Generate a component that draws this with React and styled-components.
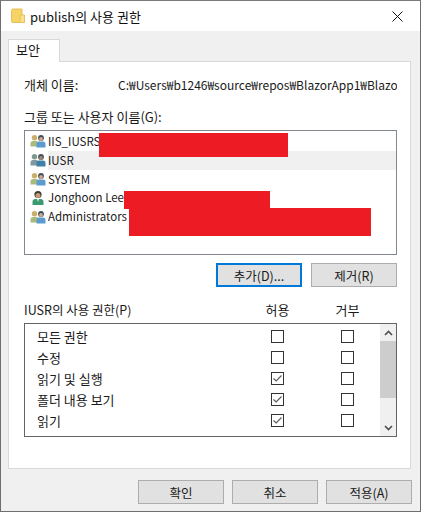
import React from 'react'
import styled, { createGlobalStyle } from 'styled-components'

const Global = createGlobalStyle`
  html, body { margin: 0; padding: 0; background: #f0f0f0; }
  * { box-sizing: border-box; }
  body {
    font-family: "Noto Sans CJK KR", sans-serif;
    font-size: 13px;
    color: #1a1a1a;
  }
`

const Window = styled.div`
  width: 421px;
  height: 512px;
  display: flex;
  flex-direction: column;
  background: #f0f0f0;
  border: 1px solid #6e6e6e;
  border-top-color: #7a7a7a;
  overflow: hidden;
`

const TitleBar = styled.div`
  height: 30px;
  flex: none;
  background: #fff;
  display: flex;
  align-items: center;
  padding-left: 10px;
  gap: 5px;
`

const TitleText = styled.div`
  flex: 1;
  font-size: 13px;
  color: #111;
`

const CloseButton = styled.div`
  width: 46px;
  height: 30px;
  display: flex;
  align-items: center;
  justify-content: center;
`

const Body = styled.div`
  flex: 1;
  display: flex;
  flex-direction: column;
  padding: 8px 9px 7px 7px;
`

const Tab = styled.div`
  width: 52px;
  height: 23px;
  margin-bottom: -1px;
  background: #fff;
  border: 1px solid #d9d9d9;
  border-bottom: none;
  padding-left: 7px;
  line-height: 20px;
  position: relative;
  z-index: 1;
`

const Panel = styled.div`
  height: 408px;
  background: #fff;
  border: 1px solid #d9d9d9;
  padding: 0 13px 0 15px;
  display: flex;
  flex-direction: column;
`

const ObjectRow = styled.div`
  height: 18px;
  margin-top: 13px;
  display: flex;
  align-items: center;
`

const ObjectLabel = styled.div`
  width: 94px;
  flex: none;
`

const ObjectPath = styled.div`
  flex: 1;
  overflow: hidden;
  white-space: nowrap;
  font-size: 12px;
`

const SectionLabel = styled.div`
  height: 18px;
  line-height: 18px;
  margin-top: 15px;
`

const UserList = styled.div`
  position: relative;
  height: 125px;
  margin-top: 4px;
  border: 1px solid #828790;
  padding-top: 1px;
`

const UserRow = styled.div`
  height: 18.8px;
  display: flex;
  align-items: center;
  padding-left: 5px;
  gap: 2px;
`

const UserName = styled.div`
  flex: 1;
  height: 100%;
  line-height: 18px;
  font-size: 11.5px;
  background: ${({ $selected }) => ($selected ? '#f0f0f0' : 'transparent')};
`

// 이름을 가린 빨간 칠
const Redaction = styled.div`
  position: absolute;
  background: #ed1c24;
  left: ${({ $x }) => $x}px;
  top: ${({ $y }) => $y}px;
  width: ${({ $w }) => $w}px;
  height: ${({ $h }) => $h}px;
`

const ButtonRow = styled.div`
  display: flex;
  justify-content: flex-end;
  gap: ${({ $gap }) => $gap}px;
  margin-top: ${({ $top }) => $top}px;
  margin-right: ${({ $right }) => $right || 0}px;
`

const Button = styled.div`
  width: 86px;
  height: 24px;
  background: #e1e1e1;
  font-size: 12.5px;
  border: ${({ $focused }) => ($focused ? '2px solid #0078d7' : '1px solid #adadad')};
  display: flex;
  align-items: center;
  justify-content: center;
`

const PermHeader = styled.div`
  display: grid;
  grid-template-columns: 247px 13px 57px 13px;
  height: 18px;
  line-height: 18px;
  margin-top: 14px;
`

const PermTitle = styled.div`
  font-size: 12.5px;
`

const HeaderCell = styled.div`
  display: flex;
  justify-content: center;
  white-space: nowrap;
`

const PermBox = styled.div`
  height: 114px;
  margin-top: 4px;
  border: 1px solid #646464;
  display: flex;
`

const PermRows = styled.div`
  flex: 1;
  padding: 2px 0 0 12px;
`

const PermRow = styled.div`
  display: grid;
  grid-template-columns: 234px 13px 57px 13px;
  height: 21px;
  align-items: center;
`

const CheckBox = styled.div`
  grid-column: ${({ $col }) => $col};
  width: 13px;
  height: 13px;
  border: 1px solid #333;
  background: #fff;
  display: flex;
`

const ScrollBar = styled.div`
  width: 16px;
  flex: none;
  background: #f0f0f0;
  display: flex;
  flex-direction: column;
`

const ScrollArrow = styled.div`
  height: 17px;
  flex: none;
  display: flex;
  align-items: center;
  justify-content: center;
`

const ScrollTrack = styled.div`
  flex: 1;
`

const ScrollThumb = styled.div`
  height: 57px;
  background: #cdcdcd;
`

const Folder = () => (
  <svg width="14" height="16" viewBox="0 0 14 16">
    <path d="M0.5 2.5 Q0.5 1 2 1 H8 L11 1 V14.5 H1.5 Q0.5 14.5 0.5 13.5 Z" fill="#f6d365" stroke="#e6c05a" />
    <path d="M9 14.5 V7 H13.5 V14.5 Z" fill="#fbe08c" stroke="#e6c05a" />
  </svg>
)

const CloseIcon = () => (
  <svg width="11" height="11" viewBox="0 0 11 11">
    <path d="M0.5 0.5 L10.5 10.5 M10.5 0.5 L0.5 10.5" stroke="#111" strokeWidth="1" />
  </svg>
)

const GroupIcon = ({ muted }) => (
  <svg width="16" height="16" viewBox="0 0 16 16">
    <circle cx="4.5" cy="4.8" r="2.7" fill={muted ? '#7f9a8c' : '#c9b06a'} />
    <path d="M0.5 13.5 V10.5 Q0.5 8 3 8 H6 Q8.5 8 8.5 10.5 V13.5 Z" fill={muted ? '#7c9aa0' : '#a9bb7c'} />
    <circle cx="11" cy="5" r="2.9" fill="#3d4f5c" />
    <circle cx="11" cy="6" r="1.9" fill={muted ? '#a8886e' : '#d7a888'} />
    <path d="M6.5 14.5 V11 Q6.5 8.5 9 8.5 H13 Q15.5 8.5 15.5 11 V14.5 Z" fill={muted ? '#3f7fa8' : '#5b9bd0'} />
  </svg>
)

const UserIcon = () => (
  <svg width="16" height="16" viewBox="0 0 16 16">
    <circle cx="8" cy="4.5" r="3.6" fill="#3a3a30" />
    <circle cx="8" cy="5.6" r="2.5" fill="#c99a78" />
    <path d="M2.5 15 V12 Q2.5 9 5.5 9 H10.5 Q13.5 9 13.5 12 V15 Z" fill="#3c9a70" />
    <path d="M7 9 H9 L8 12 Z" fill="#dff0e6" />
  </svg>
)

const Check = () => (
  <svg width="11" height="11" viewBox="0 0 11 11">
    <path d="M1.5 5.5 L4.2 8 L9.5 2.5" fill="none" stroke="#5a5a5a" strokeWidth="1.1" />
  </svg>
)

const Chevron = ({ down }) => (
  <svg width="9" height="6" viewBox="0 0 9 6">
    <path d={down ? 'M1 1 L4.5 4.5 L8 1' : 'M1 5 L4.5 1.5 L8 5'} fill="none" stroke="#505050" strokeWidth="1.7" />
  </svg>
)

const users = [
  { name: 'IIS_IUSRS', icon: <GroupIcon /> },
  { name: 'IUSR', icon: <GroupIcon muted />, selected: true },
  { name: 'SYSTEM', icon: <GroupIcon /> },
  { name: 'Jonghoon Lee', icon: <UserIcon /> },
  { name: 'Administrators', icon: <GroupIcon /> },
]

const redactions = [
  { x: 74, y: 2, w: 189, h: 24 },
  { x: 99, y: 60, w: 146, h: 18 },
  { x: 104, y: 77, w: 242, h: 28 },
]

const perms = [
  { name: '모든 권한', allow: false },
  { name: '수정', allow: false },
  { name: '읽기 및 실행', allow: true },
  { name: '폴더 내용 보기', allow: true },
  { name: '읽기', allow: true },
]

const App = () => (
  <Window>
    <Global />
    <TitleBar>
      <Folder />
      <TitleText>publish의 사용 권한</TitleText>
      <CloseButton><CloseIcon /></CloseButton>
    </TitleBar>
    <Body>
      <Tab>보안</Tab>
      <Panel>
        <ObjectRow>
          <ObjectLabel>개체 이름:</ObjectLabel>
          <ObjectPath>C:₩Users₩b1246₩source₩repos₩BlazorApp1₩BlazorApp1₩bin₩publish</ObjectPath>
        </ObjectRow>
        <SectionLabel>그룹 또는 사용자 이름(G):</SectionLabel>
        <UserList>
          {users.map((u) => (
            <UserRow key={u.name}>
              {u.icon}
              <UserName $selected={u.selected}>{u.name}</UserName>
            </UserRow>
          ))}
          {redactions.map((r) => (
            <Redaction key={r.x} $x={r.x} $y={r.y} $w={r.w} $h={r.h} />
          ))}
        </UserList>
        <ButtonRow $gap={9} $top={8}>
          <Button $focused>추가(D)...</Button>
          <Button>제거(R)</Button>
        </ButtonRow>
        <PermHeader>
          <PermTitle>IUSR의 사용 권한(P)</PermTitle>
          <HeaderCell>허용</HeaderCell>
          <div />
          <HeaderCell>거부</HeaderCell>
        </PermHeader>
        <PermBox>
          <PermRows>
            {perms.map((p) => (
              <PermRow key={p.name}>
                <div>{p.name}</div>
                <CheckBox $col={2}>{p.allow && <Check />}</CheckBox>
                <CheckBox $col={4} />
              </PermRow>
            ))}
          </PermRows>
          <ScrollBar>
            <ScrollArrow><Chevron /></ScrollArrow>
            <ScrollThumb />
            <ScrollTrack />
            <ScrollArrow><Chevron down /></ScrollArrow>
          </ScrollBar>
        </PermBox>
      </Panel>
      <ButtonRow $gap={8} $top={11} $right={-1}>
        <Button>확인</Button>
        <Button>취소</Button>
        <Button>적용(A)</Button>
      </ButtonRow>
    </Body>
  </Window>
)

export default App
